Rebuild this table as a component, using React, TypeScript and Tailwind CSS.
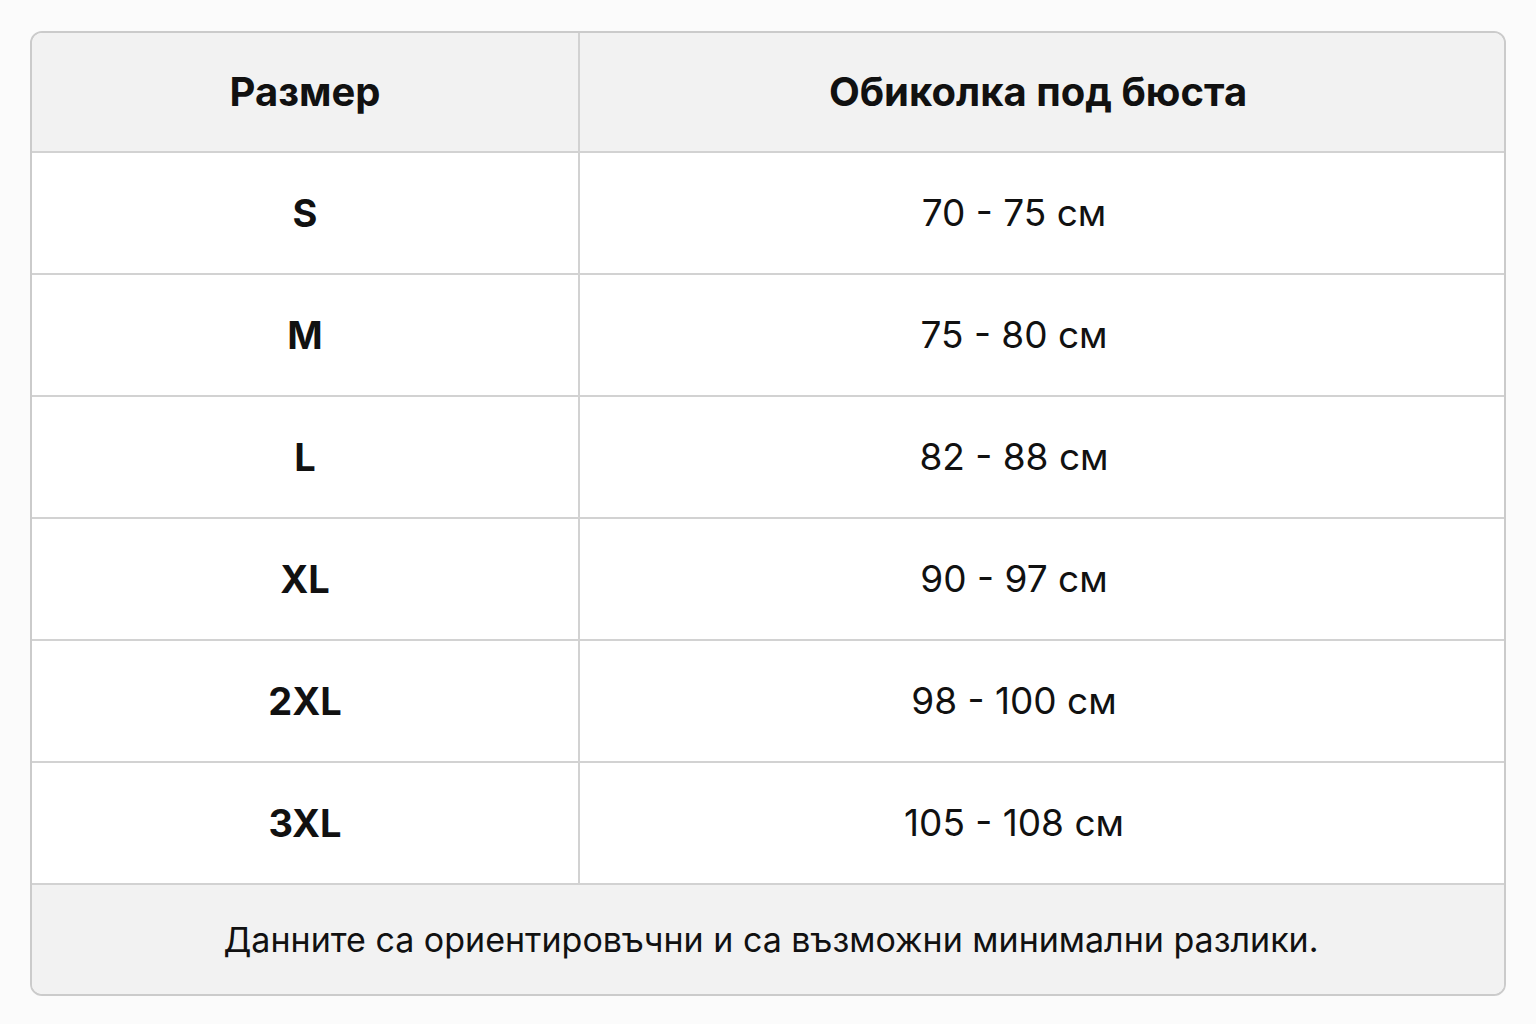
import React from 'react';

const rows = [
    { size: 'S', range: '70 - 75 см' },
    { size: 'M', range: '75 - 80 см' },
    { size: 'L', range: '82 - 88 см' },
    { size: 'XL', range: '90 - 97 см' },
    { size: '2XL', range: '98 - 100 см' },
    { size: '3XL', range: '105 - 108 см' },
];

export default function App() {
    return (
        <div className="min-h-screen w-full bg-[#fbfbfb] pt-[31px] pl-[30px]" style={{ fontFamily: 'Inter, "Noto Sans", sans-serif' }}>
            <div className="w-[1476px] overflow-hidden rounded-[12px] border-2 border-[#cbcbcb] bg-white text-[#111]">
                <div className="grid h-[118px] grid-cols-[548px_1fr] bg-[#f2f2f2]">
                    <div className="flex items-center justify-center border-r-2 border-[#d2d2d2] text-[40px] font-bold">Размер</div>
                    <div className="flex items-center justify-center pr-[8px] text-[40px] font-bold">Обиколка под бюста</div>
                </div>
                {rows.map((r) => (
                    <div key={r.size} className="grid h-[122px] grid-cols-[548px_1fr] border-t-2 border-[#d2d2d2]">
                        <div className="flex items-center justify-center border-r-2 border-[#d2d2d2] text-[38px] font-bold">{r.size}</div>
                        <div className="flex items-center justify-center pr-[56px] text-[37px]">{r.range}</div>
                    </div>
                ))}
                <div className="flex h-[111px] items-center justify-center border-t-2 border-[#d2d2d2] bg-[#f2f2f2] pl-[6px] text-[34px]">
                    Данните са ориентировъчни и са възможни минимални разлики.
                </div>
            </div>
        </div>
    );
}
